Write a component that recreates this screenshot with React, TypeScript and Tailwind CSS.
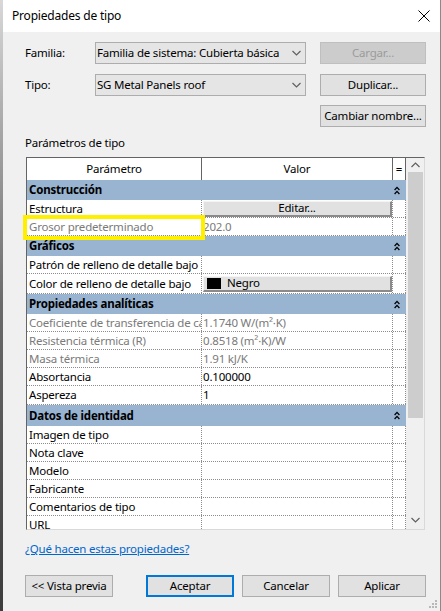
import React from "react";

type GridRow =
  | { kind: "band"; label: string; h?: string }
  | {
      kind: "row";
      label: string;
      value?: string;
      dim?: boolean;
      control?: "edit" | "color";
      h?: string;
    };

const ROWS: GridRow[] = [
  { kind: "band", label: "Construcción" },
  { kind: "row", label: "Estructura", control: "edit" },
  { kind: "row", label: "Grosor predeterminado", value: "202.0", dim: true },
  { kind: "band", label: "Gráficos" },
  { kind: "row", label: "Patrón de relleno de detalle bajo" },
  { kind: "row", label: "Color de relleno de detalle bajo", control: "color", h: "h-[20px]" },
  { kind: "band", label: "Propiedades analíticas" },
  {
    kind: "row",
    label: "Coeficiente de transferencia de calor (U)",
    value: "1.1740 W/(m²·K)",
    dim: true,
  },
  { kind: "row", label: "Resistencia térmica (R)", value: "0.8518 (m²·K)/W", dim: true },
  { kind: "row", label: "Masa térmica", value: "1.91 kJ/K", dim: true },
  { kind: "row", label: "Absortancia", value: "0.100000" },
  { kind: "row", label: "Aspereza", value: "1", h: "h-[19px]" },
  { kind: "band", label: "Datos de identidad", h: "h-[21px]" },
  { kind: "row", label: "Imagen de tipo" },
  { kind: "row", label: "Nota clave" },
  { kind: "row", label: "Modelo" },
  { kind: "row", label: "Fabricante" },
  { kind: "row", label: "Comentarios de tipo" },
  { kind: "row", label: "URL" },
];

function Chevron({ up = false }: { up?: boolean }) {
  return (
    <svg width="9" height="6" viewBox="0 0 9 6" aria-hidden>
      <path
        d={up ? "M0.5 5 L4.5 1 L8.5 5" : "M0.5 1 L4.5 5 L8.5 1"}
        fill="none"
        stroke="#606060"
        strokeWidth="1.2"
      />
    </svg>
  );
}

function Collapse() {
  return (
    <svg width="6" height="9" viewBox="0 0 6 9" aria-hidden>
      <path d="M0.6 4 L3 1.4 L5.4 4" fill="none" stroke="#000" strokeWidth="1.3" />
      <path d="M0.6 8 L3 5.4 L5.4 8" fill="none" stroke="#000" strokeWidth="1.3" />
    </svg>
  );
}

function WinButton({
  children,
  className = "",
  disabled = false,
  primary = false,
}: {
  children: React.ReactNode;
  className?: string;
  disabled?: boolean;
  primary?: boolean;
}) {
  const tone = disabled
    ? "border border-[#bfbfbf] bg-[#cccccc] text-[#9b9b9b]"
    : primary
      ? "border-2 border-[#0078d7] bg-[#e1e1e1] text-black"
      : "border border-[#adadad] bg-[#e1e1e1] text-black";
  return (
    <button
      type="button"
      className={`flex h-[22px] items-center justify-center whitespace-nowrap leading-none ${tone} ${className}`}
    >
      {children}
    </button>
  );
}

function Combo({ text }: { text: string }) {
  return (
    <div className="flex h-[22px] w-[211px] items-center justify-between border border-[#adadad] bg-[#e5e5e5] pl-[1px] pr-[4px]">
      <span className="whitespace-nowrap text-black">{text}</span>
      <Chevron />
    </div>
  );
}

function CellButton({ children, center = false }: { children: React.ReactNode; center?: boolean }) {
  return (
    <div
      className={`flex h-[16px] w-[190px] items-center border-l border-t border-b-2 border-r-2 border-l-[#f4f4f4] border-t-[#f4f4f4] border-b-[#8a8a8a] border-r-[#8a8a8a] bg-[#e1e1e1] text-black ${
        center ? "justify-center" : "justify-start pl-[3px]"
      }`}
    >
      {children}
    </div>
  );
}

function Grid() {
  return (
    <div className="relative ml-[2px] mr-[1px] mt-[6px] flex h-[373px] border border-l-[#646464] border-t-[#646464] border-r-[#d9d9d9] border-b-[#d9d9d9]">
      <div className="w-[379px] overflow-hidden bg-white">
        <div className="grid h-[22px] grid-cols-[175px_191px_13px]">
          <div className="flex items-center justify-center border-r border-[#646464]">Parámetro</div>
          <div className="flex items-center justify-center border-r border-[#646464]">Valor</div>
          <div className="flex items-center justify-center border-r border-[#646464]">=</div>
        </div>
        {ROWS.map((row, i) => {
          if (row.kind === "band") {
            return (
              <div
                key={i}
                className={`flex items-center justify-between bg-[#99b4d1] pl-[2px] pr-[6px] font-bold text-black ${
                  row.h ?? "h-[20px]"
                }`}
              >
                <span>{row.label}</span>
                <Collapse />
              </div>
            );
          }
          const textTone = row.dim ? "text-[#7a7a7a]" : "text-black";
          return (
            <div
              key={i}
              className={`grid grid-cols-[175px_191px_13px] border-b border-dotted border-[#8c8c8c] ${
                row.h ?? "h-[18px]"
              }`}
            >
              <div
                className={`flex items-center overflow-hidden whitespace-nowrap border-r border-dotted border-[#8c8c8c] pl-[2px] ${textTone}`}
              >
                {row.label}
              </div>
              <div
                className={`flex items-center overflow-hidden whitespace-nowrap border-r border-dotted border-[#8c8c8c] pl-[1px] ${textTone}`}
              >
                {row.control === "edit" && <CellButton center>Editar...</CellButton>}
                {row.control === "color" && (
                  <CellButton>
                    <span className="mr-[6px] h-[11px] w-[14px] bg-black" />
                    <span>Negro</span>
                  </CellButton>
                )}
                {row.value}
              </div>
              <div className="border-r border-dotted border-[#8c8c8c]" />
            </div>
          );
        })}
      </div>
      <div className="flex w-[18px] flex-col bg-[#f0f0f0]">
        <div className="flex h-[14px] items-center justify-center pl-[1px]">
          <Chevron up />
        </div>
        <div className="ml-[2px] h-[246px] w-[15px] bg-[#cdcdcd]" />
        <div className="flex-1" />
        <div className="mb-[4px] flex h-[10px] items-center justify-center pl-[1px]">
          <Chevron />
        </div>
      </div>
      <div className="pointer-events-none absolute left-[-4px] top-[57px] h-[25px] w-[182px] border-4 border-[#fff000]" />
    </div>
  );
}

export default function App() {
  return (
    <div className="flex h-[611px] w-[441px] overflow-hidden font-['Noto_Sans',sans-serif] text-[11.5px] tracking-[-0.2px] text-black">
      <div className="w-[3px] bg-gradient-to-b from-[#d8d8d8] via-[#6a6a6a] to-[#3c3c3c]" />
      <div className="relative flex w-[437px] flex-col bg-[#f0f0f0]">
        <div className="flex h-[32px] items-center justify-between bg-white pl-[9px] pr-[10px]">
          <span className="text-[12px]">Propiedades de tipo</span>
          <svg width="12" height="12" viewBox="0 0 12 12" aria-hidden>
            <path d="M0.5 0.5 L11.5 11.5 M11.5 0.5 L0.5 11.5" stroke="#000" strokeWidth="1" />
          </svg>
        </div>

        <div className="flex flex-col pl-[21px] pr-[14px] pt-[10px]">
          <div className="flex h-[22px] items-center">
            <span className="w-[71px] pl-[1px]">Familia:</span>
            <Combo text="Familia de sistema: Cubierta básica" />
            <WinButton disabled className="ml-auto w-[106px]">
              Cargar...
            </WinButton>
          </div>
          <div className="mt-[10px] flex h-[22px] items-center">
            <span className="w-[71px] pl-[1px]">Tipo:</span>
            <Combo text="SG Metal Panels roof" />
            <WinButton className="ml-auto w-[106px]">Duplicar...</WinButton>
          </div>
          <div className="mt-[9px] flex justify-end">
            <WinButton className="w-[106px]">Cambiar nombre...</WinButton>
          </div>

          <div className="mt-[8px] flex h-[16px] items-center pl-[1px]">Parámetros de tipo</div>

          <Grid />

          <div className="mt-[11px] flex h-[16px] items-center pl-[1px]">
            <a href="#" className="text-[#0066cc] underline">
              ¿Qué hacen estas propiedades?
            </a>
          </div>

          <div className="mt-[18px] flex items-center">
            <WinButton className="ml-[1px] w-[88px]">&lt;&lt; Vista previa</WinButton>
            <div className="ml-auto flex gap-[8px]">
              <WinButton primary className="w-[88px]">
                Aceptar
              </WinButton>
              <WinButton className="w-[88px]">Cancelar</WinButton>
              <WinButton className="w-[88px]">Aplicar</WinButton>
            </div>
          </div>
        </div>

        <svg
          className="absolute bottom-[3px] right-[3px]"
          width="9"
          height="9"
          viewBox="0 0 9 9"
          aria-hidden
        >
          {[
            [7, 1],
            [4, 4],
            [7, 4],
            [1, 7],
            [4, 7],
            [7, 7],
          ].map(([x, y]) => (
            <rect key={`${x}-${y}`} x={x} y={y} width="2" height="2" fill="#b8b8b8" />
          ))}
        </svg>
      </div>
      <div className="w-[1px] bg-[#8a8a8a]" />
    </div>
  );
}
